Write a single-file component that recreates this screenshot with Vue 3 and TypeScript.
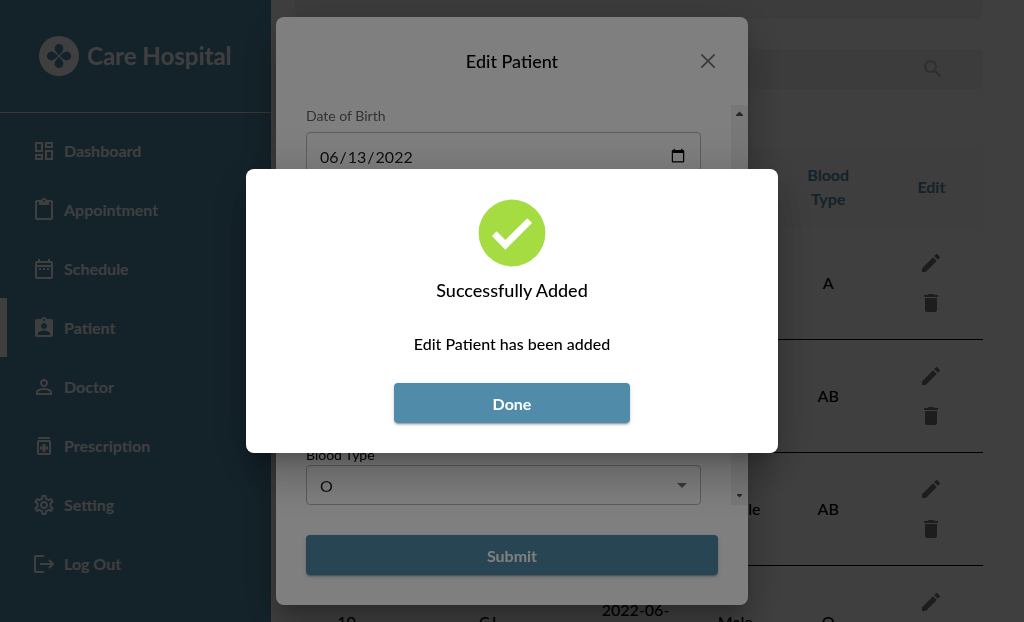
<script setup lang="ts">
import { ref } from 'vue'

interface NavItem {
  label: string
  icon: string
  outline?: boolean
}

interface PatientRow {
  id: string
  name: string
  birth: string
  gender: string
  blood: string
}

const navItems: NavItem[] = [
  {
    label: 'Dashboard',
    icon: 'M19 5v2h-4V5h4M9 5v6H5V5h4m10 8v6h-4v-6h4M9 17v2H5v-2h4M21 3h-8v6h8V3zM11 3H3v10h8V3zm10 8h-8v10h8V11zm-10 4H3v6h8v-6z',
  },
  {
    label: 'Appointment',
    icon: 'M19 2h-4.18C14.4.84 13.3 0 12 0c-1.3 0-2.4.84-2.82 2H5c-1.1 0-2 .9-2 2v16c0 1.1.9 2 2 2h14c1.1 0 2-.9 2-2V4c0-1.1-.9-2-2-2zm-7 0c.55 0 1 .45 1 1s-.45 1-1 1-1-.45-1-1 .45-1 1-1zm7 18H5V4h2v3h10V4h2v16z',
  },
  {
    label: 'Schedule',
    icon: 'M7 11h2v2H7v-2zm14-5v14c0 1.1-.9 2-2 2H5c-1.11 0-2-.9-2-2l.01-14c0-1.1.88-2 1.99-2h1V2h2v2h8V2h2v2h1c1.1 0 2 .9 2 2zM5 8h14V6H5v2zm14 12V10H5v10h14zm-4-7h2v-2h-2v2zm-4 0h2v-2h-2v2z',
  },
  {
    label: 'Patient',
    icon: 'M19 3h-4.18C14.4 1.84 13.3 1 12 1c-1.3 0-2.4.84-2.82 2H5c-1.1 0-2 .9-2 2v14c0 1.1.9 2 2 2h14c1.1 0 2-.9 2-2V5c0-1.1-.9-2-2-2zm-7 0c.55 0 1 .45 1 1s-.45 1-1 1-1-.45-1-1 .45-1 1-1zm0 4c1.66 0 3 1.34 3 3s-1.34 3-3 3-3-1.34-3-3 1.34-3 3-3zm6 12H6v-1.4c0-2 4-3.1 6-3.1s6 1.1 6 3.1V19z',
  },
  {
    label: 'Doctor',
    icon: 'M12 5.9c1.16 0 2.1.94 2.1 2.1s-.94 2.1-2.1 2.1S9.9 9.16 9.9 8s.94-2.1 2.1-2.1m0 9c2.97 0 6.1 1.46 6.1 2.1v1.1H5.9V17c0-.64 3.13-2.1 6.1-2.1M12 4C9.79 4 8 5.79 8 8s1.79 4 4 4 4-1.79 4-4-1.79-4-4-4zm0 9c-2.67 0-8 1.34-8 4v3h16v-3c0-2.66-5.33-4-8-4z',
  },
  {
    label: 'Prescription',
    icon: 'M6 3h12v2H6zm11 3H7c-1.1 0-2 .9-2 2v11c0 1.1.9 2 2 2h10c1.1 0 2-.9 2-2V8c0-1.1-.9-2-2-2zm0 13H7V8h10v11zm-6.500-1h3v-2.500H16v-3h-2.500V10h-3v2.500H8v3h2.500V18z',
  },
  {
    label: 'Setting',
    icon: 'M19.43 12.98c.04-.32.07-.64.07-.98 0-.34-.03-.66-.07-.98l2.11-1.65c.19-.15.24-.42.12-.64l-2-3.46c-.09-.16-.26-.25-.44-.25-.06 0-.12.01-.17.03l-2.49 1c-.52-.4-1.08-.73-1.69-.98l-.38-2.65C14.46 2.18 14.25 2 14 2h-4c-.25 0-.46.18-.49.42l-.38 2.65c-.61.25-1.17.59-1.69.98l-2.49-1c-.06-.02-.12-.03-.18-.03-.17 0-.34.09-.43.25l-2 3.46c-.13.22-.07.49.12.64l2.11 1.65c-.04.32-.07.65-.07.98 0 .33.03.66.07.98l-2.11 1.65c-.19.15-.24.42-.12.64l2 3.46c.09.16.26.25.44.25.06 0 .12-.01.17-.03l2.49-1c.52.4 1.08.73 1.69.98l.38 2.65c.03.24.24.42.49.42h4c.25 0 .46-.18.49-.42l.38-2.65c.61-.25 1.17-.59 1.69-.98l2.49 1c.06.02.12.03.18.03.17 0 .34-.09.43-.25l2-3.46c.12-.22.07-.49-.12-.64l-2.11-1.65zm-1.98-1.71c.04.31.05.52.05.73 0 .21-.02.43-.05.73l-.14 1.13.89.7 1.08.84-.7 1.21-1.27-.51-1.04-.42-.9.68c-.43.32-.84.56-1.25.73l-1.06.43-.16 1.13-.2 1.35h-1.4l-.19-1.35-.16-1.13-1.06-.43c-.43-.18-.83-.41-1.23-.71l-.91-.7-1.06.43-1.27.51-.7-1.21 1.08-.84.89-.7-.14-1.13c-.03-.31-.05-.54-.05-.74s.02-.43.05-.73l.14-1.13-.89-.7-1.08-.84.7-1.21 1.27.51 1.04.42.9-.68c.43-.32.84-.56 1.25-.73l1.06-.43.16-1.13.2-1.35h1.39l.19 1.35.16 1.13 1.06.43c.43.18.83.41 1.23.71l.91.7 1.06-.43 1.27-.51.7 1.21-1.07.85-.89.7.14 1.13zM12 8c-2.21 0-4 1.79-4 4s1.79 4 4 4 4-1.79 4-4-1.79-4-4-4zm0 6c-1.1 0-2-.9-2-2s.9-2 2-2 2 .9 2 2-.9 2-2 2z',
  },
  {
    label: 'Log Out',
    icon: 'M12 4H4a1 1 0 0 0-1 1v14a1 1 0 0 0 1 1h8M8 12h13M17 8l4 4-4 4',
    outline: true,
  },
]

const patients: PatientRow[] = [
  { id: '', name: '', birth: '', gender: '', blood: 'A' },
  { id: '', name: '', birth: '', gender: '', blood: 'AB' },
  { id: '', name: '', birth: '', gender: 'Female', blood: 'AB' },
  { id: '10', name: 'CJ', birth: '2022-06-13', gender: 'Male', blood: 'O' },
]

const activeItem = ref('Patient')
const birthDate = ref('2022-06-13')
const bloodType = ref('O')
const editOpen = ref(true)
const successOpen = ref(true)
</script>

<template>
  <div class="page">
    <aside class="sidebar">
      <div class="brand">
        <svg class="logo" viewBox="0 0 40 40" aria-hidden="true">
          <circle cx="20" cy="20" r="20" fill="#fff" />
          <g fill="#508ba9">
            <path
              v-for="turn in [0, 90, 180, 270]"
              :key="turn"
              :transform="`rotate(${turn} 20 20)`"
              d="M20 19.2 C18 17.2 15.6 15 15.6 12.3 a4.4 4.4 0 0 1 8.8 0 C24.4 15 22 17.2 20 19.2z"
            />
          </g>
        </svg>
        <span class="brand-name">Care Hospital</span>
      </div>
      <nav class="nav">
        <a
          v-for="item in navItems"
          :key="item.label"
          href="#"
          class="nav-item"
          :class="{ active: item.label === activeItem }"
          @click.prevent="activeItem = item.label"
        >
          <svg class="icon" :class="{ outline: item.outline }" viewBox="0 0 24 24" aria-hidden="true">
            <path :d="item.icon" />
          </svg>
          <span>{{ item.label }}</span>
        </a>
      </nav>
    </aside>

    <main class="content">
      <div class="banner"></div>
      <div class="search">
        <input type="text" class="search-input" aria-label="Search patients" />
        <svg class="icon search-icon" viewBox="0 0 24 24" aria-hidden="true">
          <path d="M15.5 14h-.79l-.28-.27C15.41 12.59 16 11.11 16 9.5 16 5.91 13.09 3 9.5 3S3 5.91 3 9.5 5.91 16 9.5 16c1.61 0 3.09-.59 4.23-1.57l.27.28v.79l5 4.99L20.49 19l-4.99-5zm-6 0C7.01 14 5 11.99 5 9.5S7.01 5 9.5 5 14 7.01 14 9.5 11.99 14 9.5 14z" />
        </svg>
      </div>
      <table class="patients">
        <colgroup>
          <col class="col-id" />
          <col class="col-name" />
          <col class="col-birth" />
          <col class="col-gender" />
          <col class="col-blood" />
          <col class="col-edit" />
        </colgroup>
        <thead>
          <tr>
            <th></th>
            <th></th>
            <th></th>
            <th></th>
            <th scope="col">Blood Type</th>
            <th scope="col">Edit</th>
          </tr>
        </thead>
        <tbody>
          <tr v-for="(row, index) in patients" :key="index">
            <td>{{ row.id }}</td>
            <td>{{ row.name }}</td>
            <td>{{ row.birth }}</td>
            <td>{{ row.gender }}</td>
            <td>{{ row.blood }}</td>
            <td>
              <div class="row-actions">
                <button type="button" class="icon-button" aria-label="Edit patient" @click="editOpen = true">
                  <svg class="icon" viewBox="0 0 24 24" aria-hidden="true">
                    <path d="M3 17.25V21h3.75L17.81 9.94l-3.75-3.75L3 17.25zM20.71 7.04c.39-.39.39-1.02 0-1.41l-2.34-2.34c-.39-.39-1.02-.39-1.41 0l-1.83 1.83 3.75 3.75 1.83-1.83z" />
                  </svg>
                </button>
                <button type="button" class="icon-button" aria-label="Delete patient">
                  <svg class="icon" viewBox="0 0 24 24" aria-hidden="true">
                    <path d="M6 19c0 1.1.9 2 2 2h8c1.1 0 2-.9 2-2V7H6v12zM19 4h-3.5l-1-1h-5l-1 1H5v2h14V4z" />
                  </svg>
                </button>
              </div>
            </td>
          </tr>
        </tbody>
      </table>
    </main>

    <div v-if="editOpen" class="overlay">
      <form class="dialog edit-dialog" role="dialog" aria-labelledby="edit-title" @submit.prevent="successOpen = true">
        <header class="dialog-header">
          <h2 id="edit-title" class="dialog-title">Edit Patient</h2>
          <button type="button" class="close" aria-label="Close" @click="editOpen = false">
            <svg viewBox="0 0 24 24" aria-hidden="true"><path d="M4 4l16 16M20 4L4 20" /></svg>
          </button>
        </header>
        <div class="dialog-body">
          <div class="fields">
            <div class="field">
              <label for="birth" class="muted">Date of Birth</label>
              <input id="birth" v-model="birthDate" type="date" class="control date" />
            </div>
            <div class="field">
              <label for="blood">Blood Type</label>
              <div class="select-wrap">
                <select id="blood" v-model="bloodType" class="control select">
                  <option>O</option>
                  <option>A</option>
                  <option>B</option>
                  <option>AB</option>
                </select>
                <svg class="icon caret" viewBox="0 0 24 24" aria-hidden="true"><path d="M7 10l5 5 5-5z" /></svg>
              </div>
            </div>
          </div>
          <div class="scrollbar" aria-hidden="true">
            <svg viewBox="0 0 17 17"><path d="M5 11h7v-1L8.500 6.500 5 10z" /></svg>
            <svg viewBox="0 0 17 17"><path d="M6 6h5v1L8.500 9.500 6 7z" /></svg>
          </div>
        </div>
        <footer class="dialog-footer">
          <button type="submit" class="primary">Submit</button>
        </footer>
      </form>
    </div>

    <div v-if="successOpen" class="overlay">
      <section class="dialog success-dialog" role="alertdialog" aria-labelledby="success-title">
        <svg class="check" viewBox="0 0 80 80" aria-hidden="true">
          <circle cx="40" cy="40" r="33.400" fill="#a5dc42" />
          <path d="M20 43l4.700-4.700 8.600 8.600 22-21.700 4.700 4.700-26.700 26.800z" fill="#fff" />
        </svg>
        <h2 id="success-title" class="dialog-title">Successfully Added</h2>
        <p class="message">Edit Patient has been added</p>
        <button type="button" class="primary done" @click="successOpen = false">Done</button>
      </section>
    </div>
  </div>
</template>

<style>
body {
  margin: 0;
}
</style>

<style scoped>
.page,
.page * {
  box-sizing: border-box;
}

.page {
  display: flex;
  height: 100vh;
  overflow: hidden;
  background: #fff;
  color: #000;
  font: 500 16px/24px Lato, "Liberation Sans", sans-serif;
}

.page button,
.page input,
.page select {
  font-family: inherit;
}

.icon {
  display: block;
  flex: none;
  width: 24px;
  height: 24px;
  fill: currentColor;
}

.icon.outline {
  fill: none;
  stroke: currentColor;
  stroke-width: 2;
}

.sidebar {
  flex: none;
  width: 271px;
  background: #508ba9;
  color: #fff;
}

.brand {
  display: flex;
  align-items: center;
  gap: 8px;
  height: 113px;
  padding-left: 39px;
  border-bottom: 1px solid #e4dccc;
}

.logo {
  flex: none;
  width: 40px;
  height: 40px;
}

.brand-name {
  font-size: 24px;
  line-height: 32px;
  font-weight: 700;
  white-space: nowrap;
}

.nav {
  padding-top: 8px;
}

.nav-item {
  display: flex;
  align-items: center;
  gap: 8px;
  height: 59px;
  padding-left: 25px;
  border-left: 7px solid transparent;
  color: inherit;
  font-size: 16px;
  font-weight: 700;
  text-decoration: none;
}

.nav-item.active {
  border-left-color: #fff;
}

.content {
  flex: 1;
  min-width: 0;
  padding: 0 41px 0 24px;
}

.banner {
  height: 19px;
  border-radius: 0 0 8px 8px;
  background: #f3f3f3;
}

.search {
  display: flex;
  align-items: center;
  height: 40px;
  margin-top: 30px;
  padding-right: 38px;
  border-radius: 4px;
  background: #f3f3f3;
}

.search-input {
  flex: 1;
  min-width: 0;
  border: 0;
  background: transparent;
}

.search-icon {
  color: #b4bcc4;
}

.patients {
  width: 100%;
  margin-top: 58px;
  border-collapse: separate;
  border-spacing: 0;
  table-layout: fixed;
  text-align: center;
}

.col-id,
.col-blood,
.col-edit {
  width: 15%;
}

.col-name {
  width: 26%;
}

.col-birth {
  width: 17%;
}

.col-gender {
  width: 12%;
}

.patients th {
  height: 80px;
  padding: 16px 24px;
  background: #fafafa;
  color: #508ba9;
  font-weight: 700;
}

.patients td {
  height: 113px;
  padding: 16px;
  border-bottom: 1px solid #000;
}

.row-actions {
  display: flex;
  flex-direction: column;
  align-items: center;
}

.icon-button {
  padding: 8px;
  border: 0;
  background: transparent;
  color: #757575;
}

.overlay {
  position: fixed;
  inset: 0;
  display: flex;
  align-items: center;
  justify-content: center;
  background: rgba(0, 0, 0, 0.5);
}

.dialog {
  border-radius: 8px;
  background: #fff;
  box-shadow:
    0 11px 15px -7px rgba(0, 0, 0, 0.2),
    0 24px 38px 3px rgba(0, 0, 0, 0.14),
    0 9px 46px 8px rgba(0, 0, 0, 0.12);
}

.dialog-title {
  margin: 0;
  font-size: 18px;
  line-height: 34px;
  font-weight: 500;
  text-align: center;
}

.edit-dialog {
  width: 472px;
}

.dialog-header {
  display: grid;
  grid-template-columns: 1fr auto 1fr;
  align-items: center;
  height: 88px;
  padding: 0 30px;
}

.dialog-header .dialog-title {
  grid-column: 2;
}

.close {
  justify-self: end;
  width: 20px;
  height: 20px;
  padding: 0;
  border: 0;
  background: transparent;
  color: #757575;
}

.close svg {
  display: block;
  width: 20px;
  height: 20px;
  fill: none;
  stroke: currentColor;
  stroke-width: 2;
}

.dialog-body {
  display: flex;
  height: 400px;
}

.fields {
  display: flex;
  flex: 1;
  flex-direction: column;
  justify-content: space-between;
  padding: 0 30px;
}

.field label {
  display: block;
  font-size: 14px;
  line-height: 20px;
  font-weight: 400;
}

.field label.muted {
  padding: 1px 0 6px;
  color: #666;
}

.control {
  display: block;
  width: 100%;
  height: 40px;
  padding: 0 13px;
  border: 1px solid #b8b8b8;
  border-radius: 4px;
  background: transparent;
  color: #222;
  font-size: 16px;
  font-weight: 400;
}

.control.date {
  height: 48px;
  padding: 0 12px;
  border-color: #b4bccc;
}

.control.select {
  appearance: none;
}

.select-wrap {
  display: grid;
  align-items: center;
}

.select-wrap > * {
  grid-area: 1 / 1;
}

.caret {
  justify-self: end;
  margin-right: 7px;
  color: #757575;
  pointer-events: none;
}

.scrollbar {
  display: flex;
  flex: none;
  flex-direction: column;
  justify-content: space-between;
  width: 17px;
  background: #f1f1f1;
}

.scrollbar svg {
  display: block;
  height: 17px;
  fill: #505050;
}

.dialog-footer {
  padding: 30px;
}

.primary {
  display: block;
  width: 100%;
  height: 40px;
  padding: 0;
  border: 0;
  border-radius: 4px;
  background: #508ba9;
  box-shadow:
    0 3px 1px -2px rgba(0, 0, 0, 0.2),
    0 2px 2px 0 rgba(0, 0, 0, 0.14),
    0 1px 5px 0 rgba(0, 0, 0, 0.12);
  color: #fff;
  font-size: 16px;
  font-weight: 700;
}

.success-dialog {
  display: flex;
  flex-direction: column;
  align-items: center;
  width: 532px;
  padding: 24px 30px 30px;
}

.check {
  display: block;
  width: 80px;
  height: 80px;
}

.message {
  margin: 25px 0 27px;
}

.primary.done {
  width: 50%;
}
</style>
